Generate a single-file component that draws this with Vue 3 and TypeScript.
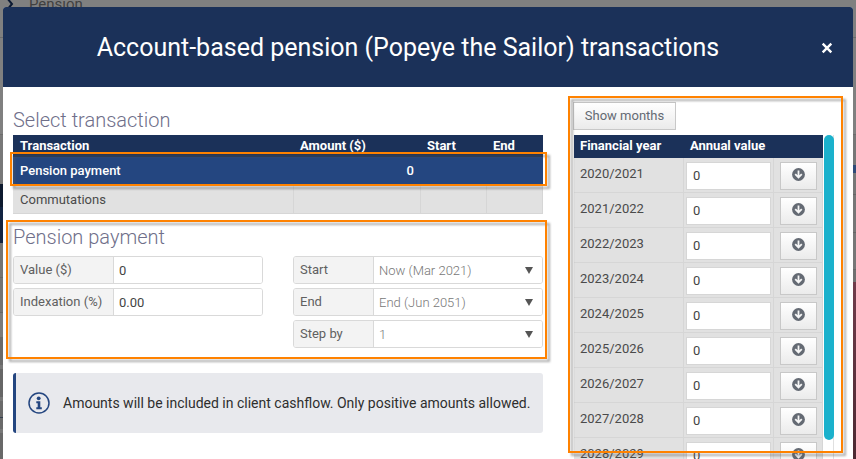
<script setup lang="ts">
import { ref } from 'vue'

interface Transaction {
  name: string
  amount: string
  start: string
  end: string
}

interface YearRow {
  year: string
  value: string
}

const transactions: Transaction[] = [
  { name: 'Pension payment', amount: '0', start: '', end: '' },
  { name: 'Commutations', amount: '', start: '', end: '' },
]
const selected = ref('Pension payment')

const value = ref('0')
const indexation = ref('0.00')
const start = ref('Now (Mar 2021)')
const end = ref('End (Jun 2051)')
const step = ref('1')

const years = ref<YearRow[]>(
  Array.from({ length: 10 }, (_, i) => ({ year: `${2020 + i}/${2021 + i}`, value: '0' })),
)
</script>

<template>
  <div class="page">
    <div class="backdrop" aria-hidden="true">
      <div class="crumb">
        <svg width="8" height="14" viewBox="0 0 8 14"><path d="M1 1l5 6-5 6" fill="none" stroke="#0c1a33" stroke-width="2" /></svg>
        <span>Pension</span>
      </div>
    </div>

    <section class="modal" role="dialog" aria-labelledby="dialog-title">
      <header class="modal-head">
        <h1 id="dialog-title">Account-based pension (Popeye the Sailor) transactions</h1>
        <button class="close" type="button" aria-label="Close">
          <svg width="12" height="12" viewBox="0 0 12 12"><path d="M1.7 1.7l8.6 8.6M10.3 1.7l-8.6 8.6" stroke="#fff" stroke-width="2.4" /></svg>
        </button>
      </header>

      <div class="modal-body">
        <div class="left">
          <h2>Select transaction</h2>
          <div class="marked">
            <table class="transactions">
              <colgroup><col class="c-name" /><col class="c-amount" /><col class="c-start" /><col class="c-end" /></colgroup>
              <thead>
                <tr><th>Transaction</th><th>Amount ($)</th><th>Start</th><th>End</th></tr>
              </thead>
              <tbody>
                <tr
                  v-for="t in transactions"
                  :key="t.name"
                  :class="{ active: t.name === selected }"
                  @click="selected = t.name"
                >
                  <td>{{ t.name }}</td>
                  <td class="num">{{ t.amount }}</td>
                  <td>{{ t.start }}</td>
                  <td>{{ t.end }}</td>
                </tr>
              </tbody>
            </table>
            <div class="mark mark-row"></div>
          </div>

          <div class="marked details">
            <h2>Pension payment</h2>
            <div class="form">
              <div class="fields">
                <div class="field wide">
                  <label for="value">Value ($)</label>
                  <input id="value" v-model="value" type="text" />
                </div>
                <div class="field wide">
                  <label for="indexation">Indexation (%)</label>
                  <input id="indexation" v-model="indexation" type="text" />
                </div>
              </div>
              <div class="fields">
                <div class="field">
                  <label for="start">Start</label>
                  <select id="start" v-model="start"><option>Now (Mar 2021)</option></select>
                  <svg class="caret" width="8" height="7" viewBox="0 0 8 7"><path d="M0 0h8L4 7z" fill="#555" /></svg>
                </div>
                <div class="field">
                  <label for="end">End</label>
                  <select id="end" v-model="end"><option>End (Jun 2051)</option></select>
                  <svg class="caret" width="8" height="7" viewBox="0 0 8 7"><path d="M0 0h8L4 7z" fill="#555" /></svg>
                </div>
                <div class="field">
                  <label for="step">Step by</label>
                  <select id="step" v-model="step"><option>1</option></select>
                  <svg class="caret" width="8" height="7" viewBox="0 0 8 7"><path d="M0 0h8L4 7z" fill="#555" /></svg>
                </div>
              </div>
            </div>
            <div class="mark mark-form"></div>
          </div>

          <div class="notice">
            <svg width="22" height="22" viewBox="0 0 22 22">
              <circle cx="11" cy="11" r="10" fill="none" stroke="#244680" stroke-width="1.5" />
              <circle cx="10.7" cy="6.3" r="1.9" fill="#244680" />
              <path d="M8.3 9.3h4v6h1.5v1.9H8.3v-1.9h1.4v-4.1H8.3z" fill="#244680" />
            </svg>
            <p>Amounts will be included in client cashflow. Only positive amounts allowed.</p>
          </div>
        </div>

        <div class="right">
          <button class="soft months" type="button">Show months</button>
          <div class="scroller">
            <table class="years">
              <colgroup><col class="y-year" /><col class="y-value" /><col class="y-action" /></colgroup>
              <thead>
                <tr><th>Financial year</th><th colspan="2">Annual value</th></tr>
              </thead>
              <tbody>
                <tr v-for="row in years" :key="row.year">
                  <td class="year">{{ row.year }}</td>
                  <td class="entry"><input v-model="row.value" type="text" :aria-label="row.year" /></td>
                  <td class="entry">
                    <button class="soft down" type="button" aria-label="Copy down">
                      <svg width="13" height="13" viewBox="0 0 13 13">
                        <circle cx="6.5" cy="6.5" r="6.4" fill="#646a73" />
                        <path d="M6.5 2.6v6.2M3.2 6.2l3.3 3.3 3.3-3.3" fill="none" stroke="#f6f6f6" stroke-width="1.8" />
                      </svg>
                    </button>
                  </td>
                </tr>
              </tbody>
            </table>
            <div class="track"><div class="thumb"></div></div>
          </div>
          <div class="mark mark-years"></div>
        </div>
      </div>
    </section>
  </div>
</template>

<style>
body {
  margin: 0;
}
</style>

<style scoped>
.page {
  position: relative;
  display: flex;
  box-sizing: border-box;
  height: 100vh;
  padding: 7px 3px 0;
  overflow: hidden;
  background: #808080;
  color: #4a4a4a;
  font: 13px/18px Roboto, "Liberation Sans", sans-serif;
}
.page *,
.page *::before,
.page *::after {
  box-sizing: border-box;
}

/* Dimmed page behind the dialog */
.backdrop {
  position: absolute;
  inset: 0;
}
.backdrop::before,
.backdrop::after {
  content: "";
  position: absolute;
  top: 0;
  bottom: 0;
  width: 3px;
}
.backdrop::before {
  left: 0;
  background: linear-gradient(
    #808080 37px, #6c6c6c 37px 38px, #808080 38px 134px, #6c6c6c 134px 135px, #787878 135px 184px,
    #0d192e 184px 207px, #122341 207px 243px, #747474 243px 277px, #666 277px 278px,
    #747474 278px 312px, #666 312px 313px, #7b7b7b 313px 337px, #6a6a6a 337px 365px, #777 365px 369px,
    #666 369px 397px, #777 397px 401px, #6a6a6a 401px 417px, #34404f 417px 418px,
    #6a6a6a 418px 429px, #777 429px 433px, #686868 433px
  );
}
.backdrop::after {
  right: 0;
  background: linear-gradient(
    #808080 37px, #6c6c6c 37px 38px, #808080 38px 134px, #6c6c6c 134px 135px, #777 135px 165px,
    #2f4a78 165px 173px, #777 173px 194px, #666 194px 195px, #777 195px 232px, #666 232px 233px,
    #777 233px 269px, #666 269px 270px, #707070 270px 282px, #713c4b 282px, #4c2932
  );
}
.crumb {
  display: flex;
  align-items: center;
  gap: 15px;
  height: 20px;
  margin: -6px 0 0 6px;
  color: #404040;
  font-size: 15px;
}

.modal {
  position: relative;
  flex: 1;
  min-width: 0;
  border-radius: 3px 3px 0 0;
  background: #fff;
}
.modal-head {
  display: flex;
  align-items: center;
  gap: 6px;
  height: 80px;
  padding: 1px 18px 0 0;
  border-radius: 3px 3px 0 0;
  background: #1b3159;
}
h1 {
  flex: 1;
  margin: 0;
  color: #fff;
  font-size: 25px;
  font-weight: 400;
  line-height: 32px;
  text-align: center;
}
.close {
  display: flex;
  padding: 2px;
  border: 0;
  background: none;
}
.modal-body {
  display: grid;
  grid-template-columns: minmax(0, 1fr) 261px;
  gap: 30px;
  padding: 15px 19px 0 10px;
}
h2 {
  margin: 0;
  color: #6f6f8a;
  font-size: 20px;
  font-weight: 300;
  line-height: 28px;
}
.left h2:first-child {
  padding-top: 4px;
}
.left {
  min-width: 0;
}

table {
  width: 100%;
  border-collapse: separate;
  border-spacing: 0;
  table-layout: fixed;
}
th {
  padding: 0 6px;
  background: #1b3159;
  color: #fff;
  font-weight: 700;
  text-align: left;
}
td {
  border-right: 1px solid #d6d6d6;
  border-bottom: 1px solid #d6d6d6;
  background: #e1e1e1;
}
.transactions {
  border-top: 1px solid #fff;
}
.transactions th {
  height: 22px;
  padding: 0 6px;
}
.transactions td {
  height: 28px;
  padding: 0 6px;
}
.transactions th:first-child,
.transactions td:first-child {
  padding-left: 7px;
}
.transactions td.num {
  text-align: right;
}
.transactions tr.active td {
  height: 29px;
  border-color: #244680;
  background: #244680;
  color: #fff;
  font-weight: 500;
}
.c-amount {
  width: 127px;
}
.c-start {
  width: 66px;
}
.c-end {
  width: 56px;
}

/* Highlight frames laid over the dialog */
.marked,
.right {
  position: relative;
}
.mark {
  position: absolute;
  border: 2px solid #ff8200;
  filter: drop-shadow(3px 3px 1px rgba(90, 90, 90, 0.5));
  pointer-events: none;
}
.mark-row {
  top: 18px;
  right: -4px;
  left: -3px;
  height: 34px;
}
.mark-form {
  top: 6px;
  right: -4px;
  bottom: -11px;
  left: -7px;
}
.mark-years {
  top: -6px;
  right: -9px;
  left: -5px;
  height: 357px;
}

.details.marked h2 {
  padding-top: 9px;
}
.form {
  display: grid;
  grid-template-columns: 1fr 1fr;
  gap: 30px;
  padding-top: 5px;
}
.fields {
  display: flex;
  flex-direction: column;
  gap: 4px;
}
.field {
  position: relative;
  display: flex;
  height: 28px;
  border: 1px solid #d9d9d9;
  border-radius: 3px;
  overflow: hidden;
}
.field label {
  flex: none;
  width: 80px;
  padding: 4px 6px;
  border-right: 1px solid #d9d9d9;
  background: #f3f3f3;
  color: #606060;
}
.field.wide label {
  width: 100px;
}
input,
select {
  width: 100%;
  min-width: 0;
  margin: 0;
  border: 0;
  border-radius: 0;
  background: #fff;
  color: #444;
  font: inherit;
  outline: 0;
}
.field input,
.field select {
  flex: 1;
  padding: 2px 5px 0;
}
.field select {
  appearance: none;
  color: #777;
  font-weight: 300;
}
.caret {
  position: absolute;
  top: 10px;
  right: 9px;
  pointer-events: none;
}

.notice {
  display: flex;
  align-items: center;
  gap: 13px;
  min-height: 60px;
  margin-top: 25px;
  padding-left: 12px;
  border-left: 3px solid #244680;
  border-radius: 3px;
  background: #e8e9ed;
  color: #2e2e2e;
  font-size: 14px;
}
.notice p {
  margin: 0;
}

.soft {
  border: 1px solid #c8c8c8;
  background: linear-gradient(#fff, #ebebeb);
  color: #646a73;
  font: inherit;
}
.months {
  display: block;
  width: 103px;
  height: 28px;
  padding: 0;
}
.scroller {
  display: flex;
  gap: 1px;
  margin-top: 5px;
  padding-left: 1px;
}
.years th {
  height: 23px;
  padding: 0 6px 2px;
}
.years td {
  height: 35px;
  padding: 0 6px;
}
.years td.entry {
  padding: 2px 2px 1px;
}
.years td.year {
  padding-bottom: 2px;
}
.y-year {
  width: 110px;
}
.y-value {
  width: 90px;
}
.years input {
  display: block;
  height: 28px;
  padding: 0 6px;
  border: 1px solid #d6d6d6;
}
.years .down {
  display: flex;
  align-items: center;
  justify-content: center;
  width: 37px;
  height: 28px;
  margin: 0 auto;
  padding: 0 0 2px;
}
.track {
  flex: none;
  width: 10px;
  border-right: 1px solid #e0e0e0;
}
.thumb {
  width: 10px;
  height: 305px;
  border-radius: 5px;
  background: #1bb1cc;
}
</style>
